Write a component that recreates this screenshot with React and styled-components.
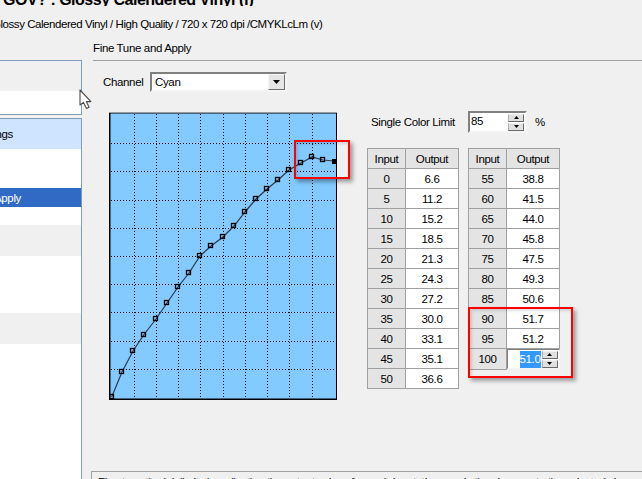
import React from 'react'
import styled, { createGlobalStyle } from 'styled-components'

const leftRows = [[0, '6.6'], [5, '11.2'], [10, '15.2'], [15, '18.5'], [20, '21.3'], [25, '24.3'], [30, '27.2'], [35, '30.0'], [40, '33.1'], [45, '35.1'], [50, '36.6']]
const rightRows = [[55, '38.8'], [60, '41.5'], [65, '44.0'], [70, '45.8'], [75, '47.5'], [80, '49.3'], [85, '50.6'], [90, '51.7'], [95, '51.2']]

// curve points, in page pixels
const curve = [[111.7, 397], [122, 372], [133, 351], [144, 334.5], [156, 319], [167, 303], [178, 287], [189, 273], [200, 256], [211, 246], [223, 237], [234, 226], [245, 212], [256, 199], [267, 189], [278, 180], [289, 170], [301, 163], [312, 157], [323, 160]]
const lastPoint = [334, 161]
const gridX = [134, 156, 178, 200, 223, 245, 267, 289, 312]
const gridY = [143, 171, 200, 228, 256, 284, 312, 341, 369]

function App() {
  return (
    <Page>
      <GlobalStyle />
      <Header>
        <TitleClip><Title>X GOV? : Glossy Calendered Vinyl (f)</Title></TitleClip>
        <Subtitle>Glossy Calendered Vinyl / High Quality / 720 x 720 dpi /CMYKLcLm (v)</Subtitle>
      </Header>
      <Body>
        <Sidebar>
          <SidePanel>
            <SideRow $h={30} $tone="grey" />
            <SideRow $h={23} />
          </SidePanel>
          <SidePanel $grow>
            <SideRow $h={30} $tone="light" $end={68}>Settings</SideRow>
            <SideRow $h={39} />
            <SideRow $h={19} $tone="active" $end={60}>Fine Tune and Apply</SideRow>
            <SideRow $h={18} />
            <SideRow $h={31} $tone="grey" />
            <SideRow $h={57} />
            <SideRow $h={31} $tone="grey" />
          </SidePanel>
        </Sidebar>
        <Main>
          <Heading>Fine Tune and Apply</Heading>
          <Content>
            <ChannelRow>
              <Label $w={47}>Channel</Label>
              <Select>
                <SelectValue>Cyan</SelectValue>
                <SelectButton>
                  <svg width="7" height="4" viewBox="0 0 7 4"><path d="M0 0h7L3.5 4z" fill="#000" /></svg>
                </SelectButton>
              </Select>
            </ChannelRow>
            <Workspace>
              <Chart width="228" height="288" viewBox="109 112 228 288">
                <rect x="109" y="112" width="228" height="288" fill="#000" />
                <rect x="109" y="112" width="228" height="1" fill="#9a9a9a" />
                <rect x="110.5" y="113.5" width="225.5" height="285" fill="#82CAFF" />
                {gridX.map((x) => (
                  <line key={x} x1={x + 0.5} x2={x + 0.5} y1="114" y2="398" stroke="#000" strokeDasharray="1 2" />
                ))}
                {gridY.map((y) => (
                  <line key={y} x1="111" x2="336" y1={y + 0.5} y2={y + 0.5} stroke="#000" strokeDasharray="1 2" />
                ))}
                <polyline points={[...curve, lastPoint].map((p) => p.join(',')).join(' ')} fill="none" stroke="#2c3a48" strokeWidth="1.2" />
                {curve.map(([x, y]) => (
                  <rect key={x} x={Math.round(x) - 2.5} y={Math.round(y) - 2.5} width="4" height="4" fill="none" stroke="#000" strokeWidth="1.3" />
                ))}
                <rect x={lastPoint[0] - 2} y={lastPoint[1] - 2} width="5" height="5" fill="#000" />
              </Chart>
              <Controls>
                <LimitRow>
                  <Label $w={89}>Single Color Limit</Label>
                  <LimitBox>
                    <LimitValue>85</LimitValue>
                    <Spin />
                  </LimitBox>
                  <Label>%</Label>
                </LimitRow>
                <Tables>
                  <ValueTable>
                    <thead>
                      <tr><HeadCell>Input</HeadCell><HeadCell $wide>Output</HeadCell></tr>
                    </thead>
                    <tbody>
                      {leftRows.map(([input, output]) => (
                        <tr key={input}><InputCell>{input}</InputCell><OutputCell>{output}</OutputCell></tr>
                      ))}
                    </tbody>
                  </ValueTable>
                  <ValueTable>
                    <thead>
                      <tr><HeadCell>Input</HeadCell><HeadCell $wide>Output</HeadCell></tr>
                    </thead>
                    <tbody>
                      {rightRows.map(([input, output]) => (
                        <tr key={input}><InputCell>{input}</InputCell><OutputCell>{output}</OutputCell></tr>
                      ))}
                      <tr>
                        <InputCell>100</InputCell>
                        <EditCell>
                          <Editor>
                            <Selected>51.0</Selected>
                            <Spin />
                          </Editor>
                        </EditCell>
                      </tr>
                    </tbody>
                  </ValueTable>
                </Tables>
              </Controls>
            </Workspace>
            <NoteBox>Fine tune the ink limits by adjusting the output values for each input, then apply the changes to the selected channel of the profile</NoteBox>
          </Content>
        </Main>
      </Body>
      <Callout $x={294} $y={140} $w={56} $h={39} />
      <Callout $x={468} $y={307} $w={105} $h={71} />
      <Cursor width="14" height="21" viewBox="0 0 14 21">
        <path d="M1 1v15l3.5-2.6 3 6 2.6-1.2-2.8-5.6h4.6z" fill="#fff" stroke="#4a4a4a" strokeWidth="1.1" strokeLinejoin="round" />
      </Cursor>
    </Page>
  )
}

function Spin() {
  return (
    <SpinColumn>
      <SpinButton><svg width="5" height="3" viewBox="0 0 5 3"><path d="M2.5 0L5 3H0z" fill="#000" /></svg></SpinButton>
      <SpinButton><svg width="5" height="3" viewBox="0 0 5 3"><path d="M0 0h5L2.5 3z" fill="#000" /></svg></SpinButton>
    </SpinColumn>
  )
}

export default App

const GlobalStyle = createGlobalStyle`
  html, body { margin: 0; padding: 0; background: #f0f0f0; overflow: hidden; }
  * { box-sizing: border-box; }
`

const Page = styled.div`
  position: relative;
  width: 642px;
  height: 479px;
  overflow: hidden;
  display: flex;
  flex-direction: column;
  background: #f0f0f0;
  color: #000;
  font: 11.5px "Liberation Sans", Arial, sans-serif;
  letter-spacing: -0.35px;
`

const Header = styled.header`
  height: 38px;
  flex: none;
  overflow: hidden;
`

const TitleClip = styled.div`
  height: 6px;
  display: flex;
  align-items: flex-end;
  overflow: hidden;
`

const Title = styled.div`
  flex: none;
  margin-left: -11px;
  font-size: 16px;
  letter-spacing: -0.5px;
  line-height: 20px;
  font-weight: bold;
  white-space: nowrap;
  transform: translateY(4px);
`

const Subtitle = styled.div`
  margin: 11px 0 0 -8px;
  line-height: 14px;
  letter-spacing: -0.45px;
  white-space: nowrap;
`

const Body = styled.div`
  flex: 1;
  min-height: 0;
  display: flex;
`

const Sidebar = styled.aside`
  flex: none;
  width: 82px;
  padding-top: 22px;
  display: flex;
  flex-direction: column;
  gap: 3px;
`

const SidePanel = styled.div`
  display: flex;
  flex-direction: column;
  flex: ${(p) => (p.$grow ? 1 : 'none')};
  background: #fff;
  border: 1px solid #7f9db9;
  border-left: 0;
  border-bottom-width: ${(p) => (p.$grow ? 0 : '1px')};
`

const rowColors = { grey: '#f0f0f0', light: '#cfe4ff', active: '#316ac5' }

const SideRow = styled.div`
  flex: none;
  height: ${(p) => p.$h}px;
  padding-right: ${(p) => p.$end || 0}px;
  display: flex;
  align-items: center;
  justify-content: flex-end;
  white-space: nowrap;
  background: ${(p) => rowColors[p.$tone] || '#fff'};
  color: ${(p) => (p.$tone === 'active' ? '#fff' : '#000')};
`

const Main = styled.main`
  flex: 1;
  min-width: 0;
  padding-left: 11px;
  display: flex;
  flex-direction: column;
`

const Heading = styled.h2`
  flex: none;
  margin: 0;
  height: 23px;
  padding-top: 3px;
  font: inherit;
  line-height: 14px;
  border-bottom: 1px solid #a0a0a0;
  white-space: nowrap;
`

const Content = styled.div`
  flex: none;
  display: flex;
  flex-direction: column;
`

const ChannelRow = styled.div`
  height: 20px;
  margin: 11px 0 0 10px;
  display: flex;
  align-items: center;
`

const Label = styled.span`
  flex: none;
  width: ${(p) => (p.$w ? `${p.$w}px` : 'auto')};
  white-space: nowrap;
`

const Select = styled.div`
  width: 137px;
  height: 20px;
  display: flex;
  align-items: center;
  justify-content: space-between;
  padding-right: 0;
  background: #fff;
  border: 2px solid;
  border-color: #808080 #f4f4f4 #f4f4f4 #808080;
`

const SelectValue = styled.span`
  padding-left: 3px;
`

const SelectButton = styled.div`
  width: 17px;
  height: 16px;
  display: flex;
  align-items: center;
  justify-content: center;
  background: #e6e6e6;
  border: 1px solid;
  border-color: #f4f4f4 #707070 #707070 #f4f4f4;
`

const Workspace = styled.div`
  margin: 20px 0 0 16px;
  display: flex;
`

const Chart = styled.svg`
  flex: none;
  display: block;
`

const Controls = styled.div`
  margin-left: 30px;
  display: flex;
  flex-direction: column;
`

const LimitRow = styled.div`
  height: 22px;
  margin: -1px 0 0 4px;
  display: flex;
  align-items: center;
  gap: 8px;
`

const LimitBox = styled.div`
  width: 59px;
  height: 22px;
  display: flex;
  justify-content: space-between;
  align-items: center;
  padding-right: 1px;
  background: #fff;
  border: 2px solid;
  border-color: #808080 #f4f4f4 #f4f4f4 #808080;
`

const LimitValue = styled.span`
  padding: 0 0 3px 1px;
`

const SpinColumn = styled.div`
  width: 16px;
  display: flex;
  flex-direction: column;
  gap: 1px;
`

const SpinButton = styled.div`
  height: 8px;
  display: flex;
  align-items: center;
  justify-content: center;
  background: #e0e0e0;
  border: 1px solid;
  border-color: #f0f0f0 #6a6a6a #6a6a6a #b0b0b0;
`

const Tables = styled.div`
  margin-top: 15px;
  display: flex;
  align-items: flex-start;
  gap: 9px;
`

const ValueTable = styled.table`
  width: 92px;
  border-collapse: collapse;
  table-layout: fixed;
`

const Cell = styled.td`
  height: 20px;
  padding: 0;
  text-align: center;
  border: 1px solid #a0a0a0;
`

const HeadCell = styled(Cell).attrs({ as: 'th' })`
  width: ${(p) => (p.$wide ? 53 : 38)}px;
  font-weight: normal;
  background: #e4e4e4;
`

const InputCell = styled(Cell)`
  background: #e4e4e4;
`

const OutputCell = styled(Cell)`
  background: #fff;
`

const EditCell = styled(Cell)`
  border: 0;
  position: relative;
`

const Editor = styled.div`
  height: 20px;
  display: flex;
  align-items: center;
  justify-content: flex-end;
  gap: 1px;
  padding-right: 1px;
  background: #fff;
  border: 1px solid;
  border-color: #808080 #f4f4f4 #f4f4f4 #808080;
`

const Selected = styled.span`
  padding: 1px 0;
  line-height: 15px;
  background: #3399ff;
  color: #fff;
`

const NoteBox = styled.div`
  height: 40px;
  margin: 71px 0 0 -2px;
  padding: 4px 6px;
  line-height: 13px;
  white-space: nowrap;
  overflow: hidden;
  border: 2px solid #a0a0a0;
  border-width: 1px 0 0 1px;
`

const Callout = styled.div`
  position: absolute;
  left: ${(p) => p.$x}px;
  top: ${(p) => p.$y}px;
  width: ${(p) => p.$w}px;
  height: ${(p) => p.$h}px;
  border: 2px solid #ff0000;
  box-shadow: 3px 3px 4px rgba(0, 0, 0, 0.35), inset 2px 2px 3px rgba(0, 0, 0, 0.12);
`

const Cursor = styled.svg`
  position: absolute;
  left: 79px;
  top: 89px;
`
